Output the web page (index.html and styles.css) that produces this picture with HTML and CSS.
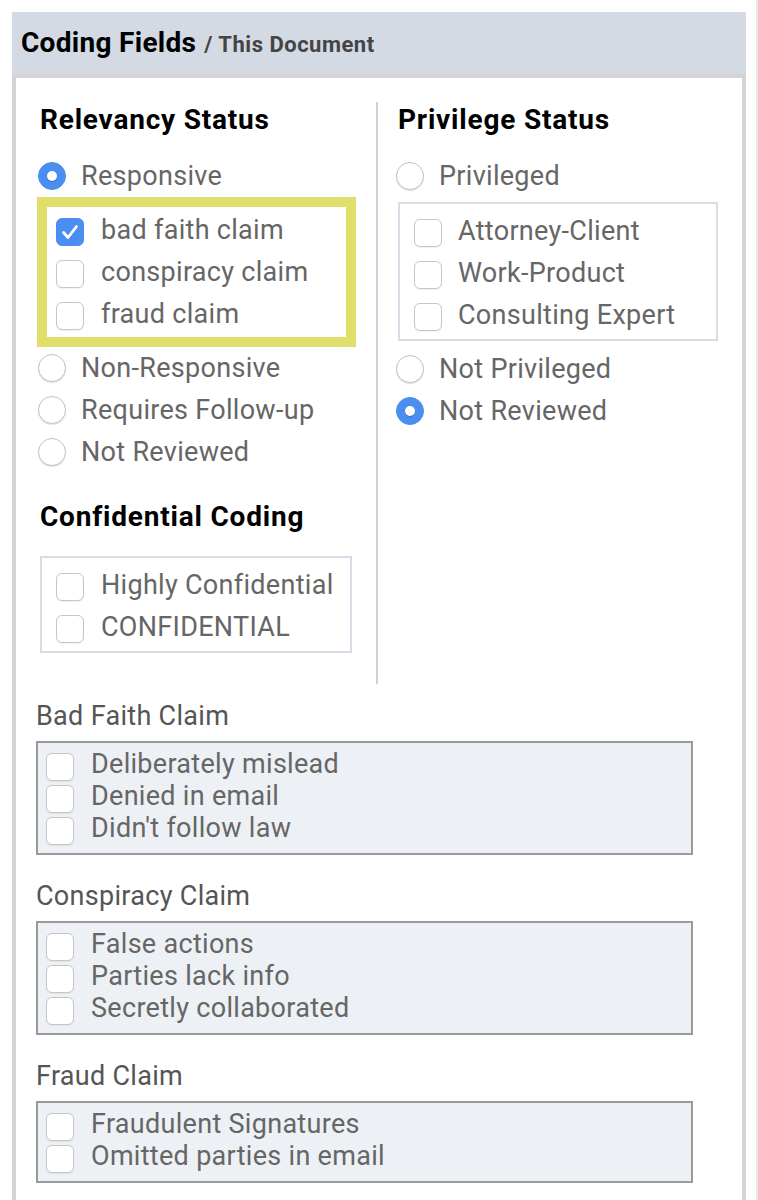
FILE: index.html
```html
<!DOCTYPE html>
<html lang="en">
<head>
<meta charset="utf-8">
<title>Coding Fields</title>
<link rel="stylesheet" href="styles.css">
</head>
<body>
<div class="page">
  <div class="panel">
    <div class="panel-head">
      <span class="title">Coding Fields</span>
      <span class="sub">/ This Document</span>
    </div>
    <div class="panel-body">
      <div class="cols">
        <div class="col col-left">
          <h2 class="heading">Relevancy Status</h2>
          <div class="opt"><span class="radio on"></span><span>Responsive</span></div>
          <div class="highlight">
            <div class="opt"><span class="check on"><svg viewBox="0 0 28 28" width="28" height="28"><polyline points="7.5,14.5 12,19.5 20.5,8.5" fill="none" stroke="#fff" stroke-width="2.8" stroke-linecap="round" stroke-linejoin="round"/></svg></span><span>bad faith claim</span></div>
            <div class="opt"><span class="check"></span><span>conspiracy claim</span></div>
            <div class="opt"><span class="check"></span><span>fraud claim</span></div>
          </div>
          <div class="opt"><span class="radio"></span><span>Non-Responsive</span></div>
          <div class="opt"><span class="radio"></span><span>Requires Follow-up</span></div>
          <div class="opt"><span class="radio"></span><span>Not Reviewed</span></div>

          <h2 class="heading heading-2">Confidential Coding</h2>
          <div class="subbox conf-box">
            <div class="opt"><span class="check"></span><span>Highly Confidential</span></div>
            <div class="opt"><span class="check"></span><span>CONFIDENTIAL</span></div>
          </div>
        </div>
        <div class="col col-right">
          <h2 class="heading">Privilege Status</h2>
          <div class="opt"><span class="radio"></span><span>Privileged</span></div>
          <div class="subbox priv-box">
            <div class="opt"><span class="check"></span><span>Attorney-Client</span></div>
            <div class="opt"><span class="check"></span><span>Work-Product</span></div>
            <div class="opt"><span class="check"></span><span>Consulting Expert</span></div>
          </div>
          <div class="opt"><span class="radio"></span><span>Not Privileged</span></div>
          <div class="opt"><span class="radio on"></span><span>Not Reviewed</span></div>
        </div>
      </div>

      <div class="claims">
        <div class="claim">
          <div class="claim-title">Bad Faith Claim</div>
          <div class="claim-box">
            <div class="copt"><span class="check"></span><span>Deliberately mislead</span></div>
            <div class="copt"><span class="check"></span><span>Denied in email</span></div>
            <div class="copt"><span class="check"></span><span>Didn't follow law</span></div>
          </div>
        </div>
        <div class="claim">
          <div class="claim-title">Conspiracy Claim</div>
          <div class="claim-box">
            <div class="copt"><span class="check"></span><span>False actions</span></div>
            <div class="copt"><span class="check"></span><span>Parties lack info</span></div>
            <div class="copt"><span class="check"></span><span>Secretly collaborated</span></div>
          </div>
        </div>
        <div class="claim">
          <div class="claim-title">Fraud Claim</div>
          <div class="claim-box">
            <div class="copt"><span class="check"></span><span>Fraudulent Signatures</span></div>
            <div class="copt"><span class="check"></span><span>Omitted parties in email</span></div>
          </div>
        </div>
      </div>
    </div>
  </div>
</div>
</body>
</html>
```

FILE: styles.css
```css
html, body {
  margin: 0;
  padding: 0;
  background: #fff;
}

body {
  font-family: Roboto, "Liberation Sans", Arial, sans-serif;
}

.page {
  box-sizing: border-box;
  width: 758px;
  min-height: 1200px;
  padding: 12px 0 0 12px;
  border-right: 2px solid #e9e9e9;
}

.panel {
  width: 734px;
}

.panel-head {
  display: flex;
  align-items: baseline;
  height: 62px;
  line-height: 62px;
  padding-left: 9px;
  background: #d3dae3;
}

.title {
  font-size: 28px;
  font-weight: 700;
  color: #000;
  letter-spacing: 0.3px;
}

.sub {
  font-size: 22px;
  font-weight: 700;
  color: #444;
  margin-left: 8px;
  letter-spacing: 0.5px;
}

.panel-body {
  background: #fff;
  border: 4px solid #d4d4d4;
  border-bottom: none;
  padding-top: 24px;
  min-height: 1130px;
}

.cols {
  display: flex;
}

.col-left {
  box-sizing: border-box;
  width: 362px;
  padding: 0 0 31px 24px;
  border-right: 2px solid #d0d0d0;
}

.col-right {
  padding-left: 20px;
}

.heading {
  margin: 0 0 18px;
  font-size: 28px;
  line-height: 35px;
  font-weight: 700;
  color: #000;
  letter-spacing: 0.8px;
  white-space: nowrap;
}

.heading-2 {
  margin-top: 26px;
}

.opt {
  display: flex;
  align-items: center;
  height: 42px;
  font-size: 27px;
  letter-spacing: 0.3px;
  color: #666;
  white-space: nowrap;
}

.radio {
  box-sizing: border-box;
  flex: none;
  width: 28px;
  height: 28px;
  margin-left: -2px;
  margin-right: 15px;
  border-radius: 50%;
  background: #fff;
  border: 1px solid #c3c3c3;
  box-shadow: 0 1px 1px rgba(0, 0, 0, 0.12);
  display: flex;
  align-items: center;
  justify-content: center;
}

.radio.on {
  background: #4a8ef1;
  border-color: #4a8ef1;
  box-shadow: none;
}

.radio.on::after {
  content: "";
  width: 10px;
  height: 10px;
  border-radius: 50%;
  background: #fff;
  box-shadow: 0 1px 1px rgba(0, 0, 0, 0.2);
}

.check {
  box-sizing: border-box;
  flex: none;
  width: 28px;
  height: 28px;
  margin-right: 17px;
  border-radius: 6px;
  background: #fff;
  border: 1px solid #c6c6c6;
  box-shadow: 0 1px 1px rgba(0, 0, 0, 0.06);
}

.opt .check {
  margin-top: 3px;
}

.check.on {
  background: #4a8ef1;
  border-color: #4a8ef1;
  box-shadow: none;
}

.check svg {
  display: block;
  margin: -1px;
}

.highlight {
  box-sizing: border-box;
  width: 319px;
  margin-left: -3px;
  border: 10px solid #e1df6b;
  padding: 2px 0 2px 9px;
}

.subbox {
  box-sizing: border-box;
  border: 2px solid #d6dde6;
}

.subbox .check {
  margin-right: 16px;
}

.conf-box {
  width: fit-content;
  margin-top: 22px;
  padding: 6px 16px 3px 14px;
}

.conf-box .check {
  margin-right: 17px;
}

.priv-box {
  width: 320px;
  margin: 5px 0 7px;
  padding: 6px 0 3px 14px;
}

.claims {
  padding: 17px 0 0 20px;
}

.claim {
  margin-bottom: 26px;
}

.claim-title {
  font-size: 27px;
  letter-spacing: 0.3px;
  line-height: 31px;
  padding-bottom: 1px;
  color: #555;
  margin-bottom: 8px;
}

.claim-box {
  box-sizing: border-box;
  width: 657px;
  border: 2px solid #9a9a9a;
  background: #edf1f5;
  padding: 5px 8px 9px;
}

.copt {
  display: flex;
  align-items: flex-start;
  height: 32px;
  font-size: 27px;
  line-height: 32px;
  letter-spacing: 0.3px;
  color: #666;
  white-space: nowrap;
}

.copt .check {
  margin-top: 5px;
  margin-right: 17px;
}
```
